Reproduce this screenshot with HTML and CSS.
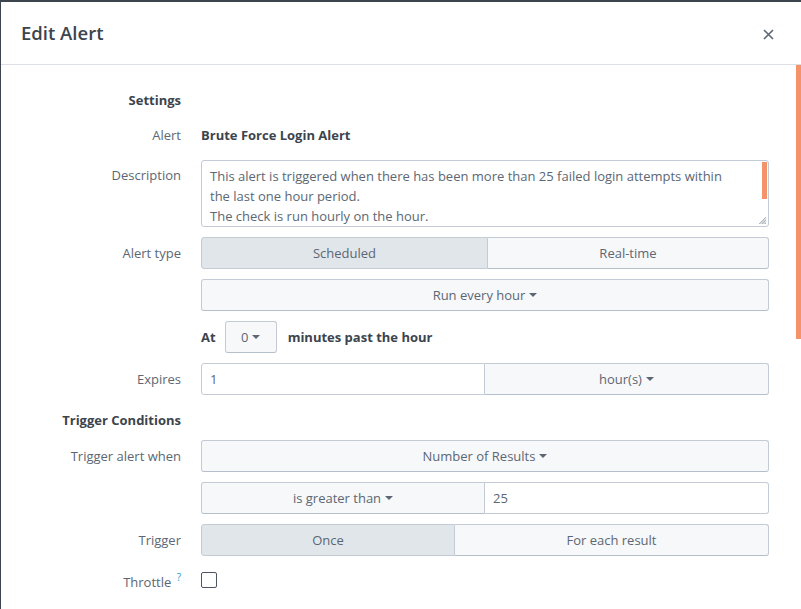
FILE: index.html
```html
<!DOCTYPE html>
<html>
<head>
<meta charset="utf-8">
<link rel="stylesheet" href="styles.css">
</head>
<body>
<div class="modal">
  <div class="header">
    <h1 class="title">Edit Alert</h1>
    <button class="close" aria-label="Close">
      <svg width="11" height="11" viewBox="0 0 11 11"><path d="M1 1L10 10M10 1L1 10" stroke="#5c6773" stroke-width="1.6" fill="none"/></svg>
    </button>
  </div>
  <div class="body">
    <div class="row heading-row"><div class="label heading">Settings</div></div>
    <div class="row text-row"><div class="label">Alert</div><div class="value strong">Brute Force Login Alert</div></div>
    <div class="row desc-row">
      <div class="label label-top">Description</div>
      <div class="textarea">
        <div class="ta-text">This alert is triggered when there has been more than 25 failed login attempts within the last one hour period.<br>The check is run hourly on the hour.</div>
        <div class="ta-thumb"></div>
        <svg class="grip" width="9" height="9" viewBox="0 0 9 9"><path d="M8 1L1 8M8 4L4 8M8 7L7 8M8 2.5L2.5 8M8 5.5L5.5 8" stroke="#8a949e" stroke-width="0.7"/></svg>
      </div>
    </div>
    <div class="row ctl-row">
      <div class="label">Alert type</div>
      <div class="group">
        <div class="btn active w287">Scheduled</div>
        <div class="btn grow">Real-time</div>
      </div>
    </div>
    <div class="row ctl-row">
      <div class="label"></div>
      <div class="group"><div class="btn grow">Run every hour <span class="caret"></span></div></div>
    </div>
    <div class="row ctl-row">
      <div class="label"></div>
      <div class="inline">
        <span class="strong">At</span>
        <div class="btn small">0 <span class="caret"></span></div>
        <span class="strong">minutes past the hour</span>
      </div>
    </div>
    <div class="row ctl-row">
      <div class="label">Expires</div>
      <div class="group">
        <div class="input w284">1</div>
        <div class="btn grow">hour(s) <span class="caret"></span></div>
      </div>
    </div>
    <div class="row heading-row2"><div class="label heading">Trigger Conditions</div></div>
    <div class="row ctl-row">
      <div class="label">Trigger alert when</div>
      <div class="group"><div class="btn grow">Number of Results <span class="caret"></span></div></div>
    </div>
    <div class="row ctl-row">
      <div class="label"></div>
      <div class="group">
        <div class="btn w284">is greater than <span class="caret"></span></div>
        <div class="input grow">25</div>
      </div>
    </div>
    <div class="row ctl-row">
      <div class="label">Trigger</div>
      <div class="group">
        <div class="btn active w254">Once</div>
        <div class="btn grow">For each result</div>
      </div>
    </div>
    <div class="row check-row">
      <div class="label">Throttle <sup class="help">?</sup></div>
      <div class="checkbox"></div>
    </div>
  </div>
  <div class="scroll-thumb"></div>
</div>
</body>
</html>
```
FILE: styles.css
```css
* { box-sizing: border-box; }
html, body { margin: 0; padding: 0; background: #ffffff; }
body {
  font-family: "Open Sans", "Liberation Sans", sans-serif;
  font-size: 13px;
  color: #5c6773;
}
.modal {
  position: relative;
  width: 801px;
  height: 609px;
  border-top: 2px solid #3c444d;
  border-left: 1px solid #3c444d;
  overflow: hidden;
}
.header {
  height: 63px;
  border-bottom: 1px solid #dce0e6;
  display: flex;
  align-items: center;
  justify-content: space-between;
  padding: 0 27px 0 20px;
}
.title {
  margin: 0;
  font-size: 18.5px;
  font-weight: 600;
  color: #3c444d;
  padding-bottom: 1px;
}
.close {
  border: 0;
  background: none;
  padding: 0;
  width: 11px;
  height: 11px;
  display: flex;
  margin-top: 2px;
}
.body {
  padding: 25px 32px 0 0;
}
.row {
  display: flex;
  align-items: center;
  gap: 20px;
  margin-bottom: 10px;
}
.label {
  width: 180px;
  flex: none;
  text-align: right;
  color: #5c6773;
}
.label-top { align-self: flex-start; padding-top: 6px; }
.heading { font-weight: 700; color: #3c444d; }
.strong { font-weight: 700; color: #3c444d; }
.heading-row { height: 20px; margin-bottom: 15px; }
.heading-row2 { height: 20px; margin-top: 15px; }
.text-row { height: 20px; margin-bottom: 15px; }
.ctl-row { height: 32px; }
.desc-row { height: 67px; align-items: stretch; }
.check-row { height: 16px; margin-top: 16px; }
.textarea {
  position: relative;
  width: 568px;
  height: 67px;
  border: 1px solid #c3cbd4;
  border-radius: 3px;
  background: #fff;
  overflow: hidden;
}
.ta-text {
  padding: 5px 40px 0 8px;
  line-height: 20px;
  color: #5c6773;
}
.ta-thumb {
  position: absolute;
  right: 1px;
  top: 1px;
  width: 5px;
  height: 37px;
  background: #f4926a;
}
.grip { position: absolute; right: 1px; bottom: 1px; }
.group {
  display: flex;
  width: 568px;
  height: 32px;
}
.btn {
  display: flex;
  align-items: center;
  justify-content: center;
  gap: 4px;
  height: 32px;
  background: #f7f8fa;
  border: 1px solid #c3cbd4;
  border-bottom-color: #b5bfc9;
  color: #5c6773;
  white-space: nowrap;
}
.group > :first-child { border-radius: 3px 0 0 3px; }
.group > :last-child { border-radius: 0 3px 3px 0; }
.group > :only-child { border-radius: 3px; }
.group > :not(:first-child) { border-left: 0; }
.btn.active { background: #e1e6eb; border-color: #c3cbd4; }
.grow { flex: 1; }
.w287 { width: 287px; }
.w284 { width: 284px; }
.w254 { width: 254px; }
.input {
  display: flex;
  align-items: center;
  height: 32px;
  padding: 0 8px;
  background: #fff;
  border: 1px solid #c3cbd4;
  color: #5c6773;
}
.caret {
  display: inline-block;
  width: 0;
  height: 0;
  border-left: 4px solid transparent;
  border-right: 4px solid transparent;
  border-top: 4px solid #5c6773;
}
.inline {
  display: flex;
  align-items: center;
  height: 32px;
}
.inline .btn.small {
  width: 52px;
  margin: 0 11px 0 9px;
  border-radius: 3px;
}
.help {
  color: #1a9cd3;
  font-size: 10px;
  vertical-align: 6px;
  margin-left: 2px;
}
.checkbox {
  width: 16px;
  height: 16px;
  border: 1px solid #4d5561;
  border-radius: 2px;
  background: #fff;
}
.scroll-thumb {
  position: absolute;
  right: 0;
  top: 63px;
  width: 5px;
  height: 274px;
  background: #f4926a;
}
```
